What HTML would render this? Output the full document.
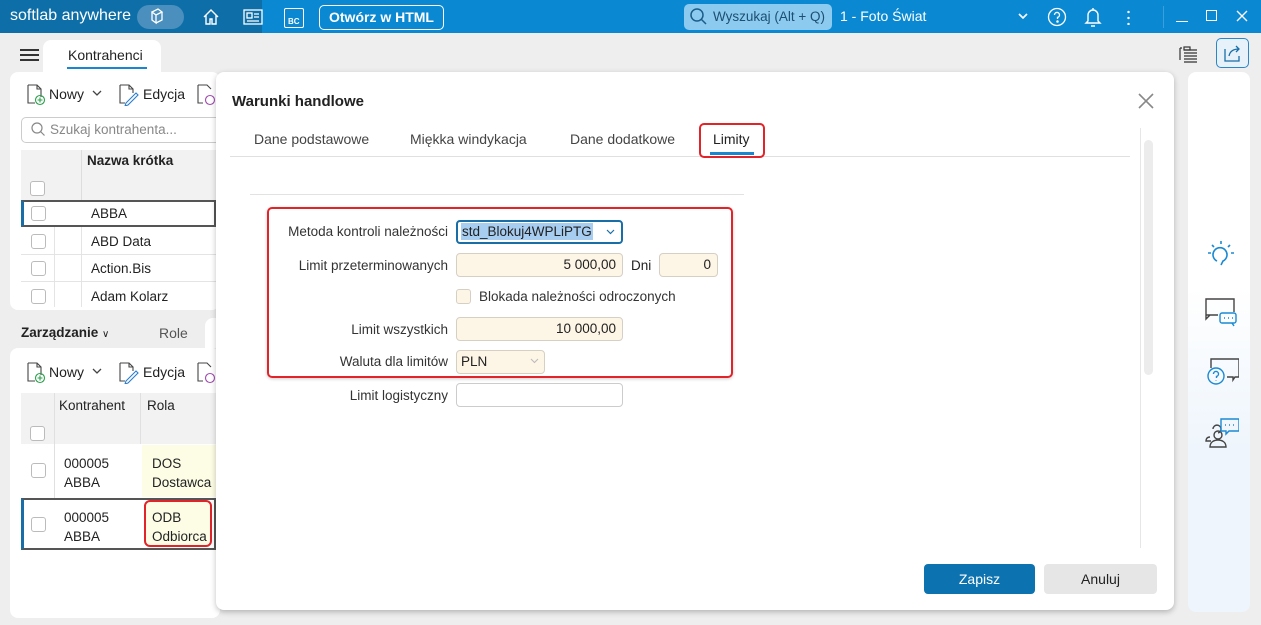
<!DOCTYPE html>
<html><head><meta charset="utf-8"><style>
*{box-sizing:border-box;margin:0;padding:0}
body{width:1261px;height:625px;overflow:hidden;background:#eeeeee;font-family:"Liberation Sans",Arial,sans-serif;font-size:13px;color:#222;position:relative}
.a{position:absolute}
.tb{left:0;top:0;width:1261px;height:33px;background:#0a89d2}
.tbl{left:0;top:0;width:262px;height:33px;background:#0d6ea8}
.w{color:#fff}
.card{background:#fff;border-radius:8px}
.cb{width:15px;height:15px;border:1px solid #bbb;border-radius:3px;background:#fff}
.inp{border:1px solid #d6d0c4;border-radius:4px;background:#fdf5e6;text-align:right;padding-right:6px;line-height:22px;height:24px;font-size:13.5px}
.lbl{text-align:right;width:200px;font-size:13.5px;color:#333}
.red{border:2px solid #e0242a;border-radius:5px}
</style></head><body>
<div class="a tb"></div><div class="a tbl"></div>
<div class="a w" style="left:10px;top:7px;font-size:16px">softlab anywhere</div>
<div class="a" style="left:137px;top:5px;width:47px;height:24px;border-radius:12px;background:#4a8fbd"></div>
<svg class="a" style="left:148px;top:8px" width="22" height="18" viewBox="0 0 22 18" fill="none" stroke="#fff" stroke-width="1.3"><path d="M4 4l6-3 4 3-6 3zM4 4v8l4 3V7M14 4v8l-6 3"/></svg>
<svg class="a" style="left:202px;top:8px" width="18" height="18" fill="none" stroke="#fff" stroke-width="1.4"><path d="M2 9l7-7 7 7M4 7v9h4v-5h2v5h4V7"/></svg>
<svg class="a" style="left:243px;top:9px" width="20" height="16" fill="none" stroke="#fff" stroke-width="1.3"><rect x="1" y="1" width="18" height="14"/><rect x="4" y="4" width="5" height="5"/><path d="M11 5h5M11 8h5M4 12h12"/></svg>
<div class="a" style="left:284px;top:8px;width:20px;height:20px;border:1.3px solid #fff;border-radius:2px;color:#fff;font-size:8px;padding:8px 0 0 3px;font-weight:bold">BC</div>
<div class="a w" style="left:319px;top:5px;width:125px;height:25px;border:1.3px solid #fff;border-radius:5px;text-align:center;line-height:23px;font-weight:bold;font-size:14px">Otwórz w HTML</div>
<div class="a" style="left:684px;top:4px;width:148px;height:26px;border-radius:5px;background:#8ccbef"></div>
<svg class="a" style="left:689px;top:8px" width="18" height="18" fill="none" stroke="#1a5d88" stroke-width="1.5"><circle cx="8" cy="7" r="6"/><path d="M12 11l5 5"/></svg>
<div class="a" style="left:713px;top:9px;color:#1d4f72;font-size:13.5px">Wyszukaj (Alt + Q)</div>
<div class="a w" style="left:840px;top:8px;font-size:14px">1 - Foto Świat</div>
<svg class="a" style="left:1018px;top:12px" width="10" height="8" fill="none" stroke="#fff" stroke-width="1.6"><path d="M1 2l4 4 4-4"/></svg>
<svg class="a" style="left:1047px;top:7px" width="20" height="20" fill="none" stroke="#fff" stroke-width="1.3"><circle cx="10" cy="10" r="8.5"/><path d="M7.5 8a2.5 2.5 0 1 1 3 2.4V12"/><circle cx="10.5" cy="14.5" r=".6" fill="#fff"/></svg>
<svg class="a" style="left:1084px;top:6px" width="18" height="22" fill="none" stroke="#fff" stroke-width="1.4"><path d="M4 15V9a5 5 0 0 1 10 0v6l2 2H2zM9 2v2M7 20h4"/></svg>
<div class="a" style="left:1127px;top:9px;width:3px;height:16px;background:radial-gradient(circle,#fff 1.2px,transparent 1.3px) 0 0/3px 6px"></div>
<div class="a" style="left:1163px;top:6px;width:1px;height:22px;background:#3aa0dc"></div>
<div class="a" style="left:1176px;top:21px;width:12px;height:1.3px;background:#fff"></div>
<div class="a" style="left:1206px;top:10px;width:11px;height:11px;border:1.3px solid #fff"></div>
<svg class="a" style="left:1236px;top:10px" width="12" height="12" stroke="#fff" stroke-width="1.3"><path d="M1 1l10 10M11 1L1 11"/></svg>

<div class="a" style="left:20px;top:49px;width:19px;height:12px;border-top:2px solid #333;border-bottom:2px solid #333"><div style="margin-top:3px;height:2px;background:#333"></div></div>
<div class="a" style="left:43px;top:40px;width:118px;height:32px;background:#fff;border-radius:8px 8px 0 0"></div>
<div class="a" style="left:68px;top:47px;font-size:14px">Kontrahenci</div>
<div class="a" style="left:67px;top:67px;width:80px;height:2px;background:#1a86d0"></div>
<svg class="a" style="left:1178px;top:45px" width="22" height="20" fill="none" stroke="#333" stroke-width="1.2"><path d="M2 3h2M2 3v12M6 5h13M6 8h13M6 11h13M6 14h13M6 17h13"/><rect x="6" y="2" width="6" height="3"/></svg>
<div class="a" style="left:1216px;top:38px;width:33px;height:30px;border:1.3px solid #2a86c8;border-radius:5px;background:#e6f1fa"></div>
<svg class="a" style="left:1222px;top:43px" width="22" height="20" fill="none" stroke="#1a6ea8" stroke-width="1.3"><path d="M3 6v12h14v-5M7 13c1-5 5-7 10-7M14 3l3 3-3 3"/></svg>

<div class="a card" style="left:10px;top:72px;width:210px;height:238px"></div>
<svg class="a" style="left:26px;top:84px" width="20" height="22" fill="none" stroke="#444" stroke-width="1.1"><path d="M2 1h9l4 4v8M2 1v18h7M11 1v4h4"/><circle cx="14" cy="16" r="4.5" stroke="#2aa14a"/><path d="M14 13.5v5M11.5 16h5" stroke="#2aa14a"/></svg>
<div class="a" style="left:49px;top:86px;font-size:14px">Nowy</div>
<svg class="a" style="left:92px;top:90px" width="10" height="7" fill="none" stroke="#444" stroke-width="1.3"><path d="M1 1l4 4 4-4"/></svg>
<svg class="a" style="left:118px;top:84px" width="22" height="22" fill="none" stroke="#444" stroke-width="1.1"><path d="M2 1h9l4 4v4M2 1v18h5M11 1v4h4"/><path d="M8 19l10-10 2 2-10 10-3 1z" stroke="#2a7ed0"/></svg>
<div class="a" style="left:143px;top:86px;font-size:14px">Edycja</div>
<svg class="a" style="left:196px;top:84px" width="20" height="22" fill="none" stroke="#444" stroke-width="1.1"><path d="M2 1h9l4 4M2 1v18h5"/><circle cx="14" cy="16" r="4.5" stroke="#a04ab0"/></svg>
<div class="a" style="left:21px;top:117px;width:200px;height:26px;border:1px solid #ccc;border-radius:5px"></div>
<svg class="a" style="left:30px;top:121px" width="16" height="16" fill="none" stroke="#888" stroke-width="1.2"><circle cx="7" cy="7" r="5"/><path d="M10.5 10.5l4 4"/></svg>
<div class="a" style="left:50px;top:122px;color:#888;font-size:13.5px">Szukaj kontrahenta...</div>
<div class="a" style="left:21px;top:150px;width:195px;height:50px;background:#f2f2f2"></div>
<div class="a" style="left:81px;top:150px;width:1px;height:50px;background:#ddd"></div>
<div class="a" style="left:87px;top:153px;font-weight:bold;font-size:13.5px">Nazwa krótka</div>
<div class="a cb" style="left:30px;top:181px"></div>
<div class="a" style="left:21px;top:200px;width:195px;height:27px;border:2px solid #555;border-left:3px solid #1a6ea8;background:#fff"></div>
<div class="a cb" style="left:31px;top:206px"></div><div class="a" style="left:91px;top:206px;font-size:13.5px">ABBA</div>
<div class="a cb" style="left:31px;top:234px"></div><div class="a" style="left:91px;top:234px;font-size:13.5px">ABD Data</div>
<div class="a" style="left:21px;top:254px;width:195px;height:1px;background:#e4e4e4"></div>
<div class="a cb" style="left:31px;top:261px"></div><div class="a" style="left:91px;top:261px;font-size:13.5px">Action.Bis</div>
<div class="a" style="left:21px;top:281px;width:195px;height:1px;background:#e4e4e4"></div>
<div class="a cb" style="left:31px;top:289px"></div><div class="a" style="left:91px;top:289px;font-size:13.5px">Adam Kolarz</div>
<div class="a" style="left:54px;top:227px;width:1px;height:80px;background:#e4e4e4"></div>
<div class="a" style="left:81px;top:227px;width:1px;height:80px;background:#e4e4e4"></div>
<div class="a" style="left:21px;top:325px;font-weight:bold;font-size:13.5px">Zarządzanie <span style="font-weight:normal;font-size:10px">&#8744;</span></div>
<div class="a" style="left:159px;top:325px;color:#555;font-size:14px">Role</div>
<div class="a" style="left:205px;top:318px;width:15px;height:30px;background:#fff;border-radius:8px 0 0 0"></div>

<div class="a card" style="left:10px;top:348px;width:210px;height:270px"></div>
<svg class="a" style="left:26px;top:362px" width="20" height="22" fill="none" stroke="#444" stroke-width="1.1"><path d="M2 1h9l4 4v8M2 1v18h7M11 1v4h4"/><circle cx="14" cy="16" r="4.5" stroke="#2aa14a"/><path d="M14 13.5v5M11.5 16h5" stroke="#2aa14a"/></svg>
<div class="a" style="left:49px;top:364px;font-size:14px">Nowy</div>
<svg class="a" style="left:92px;top:368px" width="10" height="7" fill="none" stroke="#444" stroke-width="1.3"><path d="M1 1l4 4 4-4"/></svg>
<svg class="a" style="left:118px;top:362px" width="22" height="22" fill="none" stroke="#444" stroke-width="1.1"><path d="M2 1h9l4 4v4M2 1v18h5M11 1v4h4"/><path d="M8 19l10-10 2 2-10 10-3 1z" stroke="#2a7ed0"/></svg>
<div class="a" style="left:143px;top:364px;font-size:14px">Edycja</div>
<svg class="a" style="left:196px;top:362px" width="20" height="22" fill="none" stroke="#444" stroke-width="1.1"><path d="M2 1h9l4 4M2 1v18h5"/><circle cx="14" cy="16" r="4.5" stroke="#a04ab0"/></svg>
<div class="a" style="left:21px;top:393px;width:195px;height:51px;background:#f2f2f2"></div>
<div class="a" style="left:54px;top:393px;width:1px;height:155px;background:#e0e0e0"></div>
<div class="a" style="left:140px;top:393px;width:1px;height:51px;background:#e0e0e0"></div>
<div class="a" style="left:59px;top:398px;font-size:13.5px">Kontrahent</div>
<div class="a" style="left:147px;top:398px;font-size:13.5px">Rola</div>
<div class="a cb" style="left:30px;top:426px"></div>
<div class="a" style="left:142px;top:445px;width:74px;height:52px;background:#fdfde6"></div>
<div class="a cb" style="left:31px;top:463px"></div>
<div class="a" style="left:64px;top:454px;line-height:19px;font-size:13.5px">000005<br>ABBA</div>
<div class="a" style="left:152px;top:454px;line-height:19px;font-size:13.5px">DOS<br>Dostawca</div>
<div class="a" style="left:21px;top:498px;width:195px;height:52px;border:2px solid #555;border-left:3px solid #1a6ea8;background:#fff"></div>
<div class="a cb" style="left:31px;top:517px"></div>
<div class="a" style="left:64px;top:508px;line-height:19px;font-size:13.5px">000005<br>ABBA</div>
<div class="a red" style="left:144px;top:500px;width:68px;height:47px;background:#fdfde6;border-radius:6px"></div>
<div class="a" style="left:152px;top:508px;line-height:19px;font-size:13.5px">ODB<br>Odbiorca</div>

<div class="a card" style="left:1188px;top:72px;width:62px;height:540px;background:linear-gradient(#fff 0,#fff 40%,#eef5fc 70%)"></div>
<svg class="a" style="left:1204px;top:238px" width="34" height="32" viewBox="0 0 34 32" fill="none" stroke="#1a8ad4" stroke-width="1.6"><path d="M13 23a7 7 0 1 1 6 0l-2 4"/><path d="M17 3v3M8 7l2 2M26 7l-2 2M4 15h3M27 15h3"/></svg>
<svg class="a" style="left:1203px;top:296px" width="36" height="34" viewBox="0 0 36 34" fill="none" stroke="#444" stroke-width="1.4"><path d="M15 19H3V3h28v13M3 19v4l4-4"/><rect x="17" y="17" width="16" height="10" rx="2" stroke="#1a8ad4"/><path d="M21 22h1M25 22h1M29 22h1M29 27l2 3" stroke="#1a8ad4"/></svg>
<svg class="a" style="left:1203px;top:356px" width="36" height="34" viewBox="0 0 36 34" fill="none" stroke="#444" stroke-width="1.4"><path d="M8 12V3h28v18h-4l-2 3v-3h-6"/><circle cx="13" cy="20" r="8" stroke="#1a8ad4"/><path d="M10.5 18a2.5 2.5 0 1 1 3 2.4V22M13 24.5v.5" stroke="#1a8ad4"/></svg>
<svg class="a" style="left:1203px;top:415px" width="36" height="34" viewBox="0 0 36 34" fill="none" stroke="#444" stroke-width="1.4"><path d="M7 22c-3 0-4 2-4 4h5M10 14a4 4 0 1 1 5 4"/><circle cx="15" cy="20" r="4"/><path d="M7 32c0-5 4-7 8-7s8 2 8 7z"/><path d="M18 4h18v12H26l-3 3v-3h-5z" stroke="#1a8ad4"/><path d="M22 10h1M26 10h1M30 10h1" stroke="#1a8ad4"/></svg>

<div class="a" style="left:216px;top:72px;width:958px;height:538px;background:#fff;border-radius:8px;box-shadow:0 2px 6px rgba(0,0,0,.25)"></div>
<div class="a" style="left:232px;top:93px;font-weight:bold;font-size:15px">Warunki handlowe</div>
<svg class="a" style="left:1138px;top:93px" width="16" height="16" stroke="#888" stroke-width="1.6"><path d="M1 1l14 14M15 1L1 15"/></svg>
<div class="a" style="left:254px;top:131px;color:#444;font-size:14px">Dane podstawowe</div>
<div class="a" style="left:410px;top:131px;color:#444;font-size:14px">Miękka windykacja</div>
<div class="a" style="left:570px;top:131px;color:#444;font-size:14px">Dane dodatkowe</div>
<div class="a" style="left:713px;top:131px;font-size:14px">Limity</div>
<div class="a" style="left:230px;top:156px;width:900px;height:1px;background:#e0e0e0"></div>
<div class="a" style="left:710px;top:152px;width:44px;height:3px;background:#1a86d0"></div>
<div class="a red" style="left:699px;top:123px;width:66px;height:35px"></div>
<div class="a" style="left:1144px;top:140px;width:9px;height:235px;background:#ececec;border-radius:5px"></div>
<div class="a" style="left:1140px;top:128px;width:1px;height:420px;background:#e6e6e6"></div>
<div class="a" style="left:250px;top:194px;width:494px;height:1px;background:#e2e2e2"></div>

<div class="a red" style="left:267px;top:207px;width:466px;height:171px;box-shadow:0 1px 3px rgba(0,0,0,.2)"></div>
<div class="a lbl" style="left:248px;top:224px">Metoda kontroli należności</div>
<div class="a" style="left:456px;top:220px;width:167px;height:24px;border:2px solid #1a6ea8;border-radius:4px"></div>
<div class="a" style="left:461px;top:223px;background:#a7cdf0;font-size:13.5px;line-height:17px;padding:0 1px">std_Blokuj4WPLiPTG</div>
<svg class="a" style="left:606px;top:229px" width="9" height="6" fill="none" stroke="#1a6ea8" stroke-width="1.2"><path d="M1 1l3.5 3.5L8 1"/></svg>
<div class="a lbl" style="left:248px;top:258px">Limit przeterminowanych</div>
<div class="a inp" style="left:456px;top:253px;width:167px">5 000,00</div>
<div class="a" style="left:631px;top:258px;font-size:13.5px">Dni</div>
<div class="a inp" style="left:659px;top:253px;width:59px">0</div>
<div class="a" style="left:456px;top:289px;width:15px;height:15px;border:1px solid #d6d0c4;border-radius:3px;background:#fdf5e6"></div>
<div class="a" style="left:479px;top:289px;font-size:13.5px;color:#333">Blokada należności odroczonych</div>
<div class="a lbl" style="left:248px;top:322px">Limit wszystkich</div>
<div class="a inp" style="left:456px;top:317px;width:167px">10 000,00</div>
<div class="a lbl" style="left:248px;top:354px">Waluta dla limitów</div>
<div class="a inp" style="left:456px;top:350px;width:89px;text-align:left;padding-left:4px">PLN</div>
<svg class="a" style="left:530px;top:358px" width="9" height="6" fill="none" stroke="#bbb" stroke-width="1.1"><path d="M1 1l3.5 3.5L8 1"/></svg>
<div class="a lbl" style="left:248px;top:388px">Limit logistyczny</div>
<div class="a" style="left:456px;top:383px;width:167px;height:24px;border:1px solid #ccc;border-radius:4px"></div>

<div class="a" style="left:924px;top:564px;width:111px;height:30px;background:#0d73b0;border-radius:4px;color:#fff;text-align:center;line-height:30px;font-size:14px">Zapisz</div>
<div class="a" style="left:1044px;top:564px;width:113px;height:30px;background:#e6e6e6;border-radius:4px;text-align:center;line-height:30px;font-size:14px">Anuluj</div>
</body></html>
